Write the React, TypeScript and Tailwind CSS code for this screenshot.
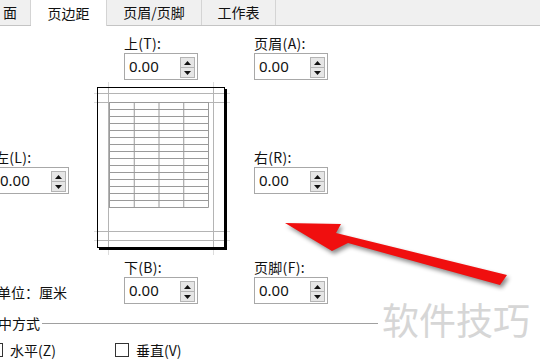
import React from 'react'

const cjk = { fontFamily: '"Noto Sans CJK SC", "Noto Sans", sans-serif' }
const num = { fontFamily: '"Noto Sans", "Noto Sans CJK SC", sans-serif' }

function Spinner() {
  return (
    <div className="absolute right-[2px] top-[3px] w-[15px] h-[21px] border border-[#b4b4b4] bg-[#e6e6e6] flex flex-col">
      <div className="flex-1 flex items-center justify-center border-b border-[#b4b4b4]">
        <svg width="7" height="4" viewBox="0 0 7 4">
          <path d="M0 4 L3.5 0 L7 4 Z" fill="#111" />
        </svg>
      </div>
      <div className="flex-1 flex items-center justify-center">
        <svg width="7" height="4" viewBox="0 0 7 4">
          <path d="M0 0 L7 0 L3.5 4 Z" fill="#111" />
        </svg>
      </div>
    </div>
  )
}

function NumBox() {
  return (
    <div
      className="relative w-[74px] h-[27px] border border-[#a8a8a8] bg-white pl-[4px] flex items-center text-[15px] text-[#111]"
      style={num}
    >
      0.00
      <Spinner />
    </div>
  )
}

function Field({ label }: { label: string }) {
  return (
    <div className="flex flex-col">
      <div className="h-[20px] leading-[20px] text-[14px] tracking-[0.3px] text-[#111] whitespace-nowrap">{label}</div>
      <NumBox />
    </div>
  )
}

function Preview() {
  const cols = [109, 133.75, 158.5, 183.25, 208]
  const rows = Array.from({ length: 16 }, (_, i) => 102 + i * 7)
  return (
    <svg width="140" height="177" viewBox="92 80 140 177">
      {/* guide extensions outside the page */}
      {[108.5, 213.5].map((x) => (
        <line key={'gv' + x} x1={x} y1={82} x2={x} y2={255} stroke="#dcdcdc" strokeWidth="1" />
      ))}
      {[93.5, 102.5, 231.5, 240.5].map((y) => (
        <line key={'gh' + y} x1={94} y1={y} x2={230} y2={y} stroke="#dcdcdc" strokeWidth="1" />
      ))}
      {/* page */}
      <rect x="97.5" y="87.5" width="127" height="160" fill="#fff" />
      {[108.5, 213.5].map((x) => (
        <line key={'v' + x} x1={x} y1={88} x2={x} y2={247} stroke="#b4b4b4" strokeWidth="1" />
      ))}
      {[93.5, 102.5, 231.5, 240.5].map((y) => (
        <line key={'h' + y} x1={98} y1={y} x2={224} y2={y} stroke="#b4b4b4" strokeWidth="1" />
      ))}
      {/* sheet grid */}
      {cols.map((x) => (
        <line key={'c' + x} x1={x + 0.5} y1={102} x2={x + 0.5} y2={207.5} stroke="#9a9a9a" strokeWidth="1" />
      ))}
      {rows.map((y) => (
        <line key={'r' + y} x1={109} y1={y + 0.5} x2={208.5} y2={y + 0.5} stroke="#9a9a9a" strokeWidth="1" />
      ))}
      <rect x="97.5" y="87.5" width="127" height="160" fill="none" stroke="#000" strokeWidth="1" />
      <rect x="225" y="89" width="2" height="161" fill="#000" />
      <rect x="99" y="248" width="128" height="2" fill="#000" />
    </svg>
  )
}

function Check({ label }: { label: string }) {
  return (
    <div className="flex items-center gap-[7px]">
      <div className="w-[14px] h-[14px] border border-[#333] bg-white" />
      <span className="text-[14px] text-[#111]">{label}</span>
    </div>
  )
}

export default function App() {
  return (
    <div className="relative w-[540px] h-[360px] overflow-hidden bg-white" style={cjk}>
      {/* Tabs */}
      <div className="flex h-[26px] bg-[#f0f0f0] border-b border-[#c4c4c4] text-[14px] text-[#111]">
        <div className="w-[31px] h-[25px] flex items-center justify-end pr-[13px] border-r border-[#d4d4d4]">面</div>
        <div className="w-[76px] h-[26px] flex items-center justify-center bg-white border-r border-[#d4d4d4] relative z-10">页边距</div>
        <div className="w-[95px] h-[25px] flex items-center justify-center border-r border-[#d4d4d4]">页眉/页脚</div>
        <div className="w-[74px] h-[25px] flex items-center justify-center border-r border-[#d4d4d4]">工作表</div>
      </div>

      <div className="ml-[-5px]">
        {/* Row 1 */}
        <div className="flex pt-[7px]">
          <div className="w-[97px]" />
          <div className="w-[162px] pl-[32px]">
            <Field label="上(T):" />
          </div>
          <Field label="页眉(A):" />
        </div>

        {/* Row 2 */}
        <div className="flex">
          <div className="w-[97px] pt-[67px]">
            <Field label="左(L):" />
          </div>
          <div className="w-[162px]">
            <Preview />
          </div>
          <div className="pt-[67px]">
            <Field label="右(R):" />
          </div>
        </div>

        {/* Row 3 */}
        <div className="flex">
          <div className="w-[97px] pt-[25px] ml-[2px] mr-[-2px] text-[14px] leading-[20px] text-[#111] whitespace-nowrap">
            单位：厘米
          </div>
          <div className="w-[162px] pl-[32px]">
            <Field label="下(B):" />
          </div>
          <Field label="页脚(F):" />
        </div>

        {/* Centering group */}
        <div className="flex items-center h-[20px] mt-[9px] ml-[-11px] w-[394px] gap-[2px]">
          <span className="text-[14px] text-[#111] whitespace-nowrap">居中方式</span>
          <div className="flex-1 h-px bg-[#a0a0a0]" />
        </div>

        <div className="flex items-center h-[20px] mt-[7px] ml-[-6px]">
          <div className="w-[126px]">
            <Check label="水平(Z)" />
          </div>
          <Check label="垂直(V)" />
        </div>
      </div>

      {/* Watermark */}
      <div className="absolute left-[382px] top-[301px] text-[37px] leading-none text-[#d6d6d6] bg-white whitespace-nowrap">
        软件技巧
      </div>

      {/* Red arrow */}
      <svg
        className="absolute left-0 top-0 drop-shadow-[2px_3px_2px_rgba(0,0,0,0.45)]"
        width="540"
        height="360"
        viewBox="0 0 540 360"
      >
        <polygon
          points="285,223 341,224 336,233 507,275 500,285 348,243 332,251"
          fill="#f00f0f"
        />
      </svg>
    </div>
  )
}
